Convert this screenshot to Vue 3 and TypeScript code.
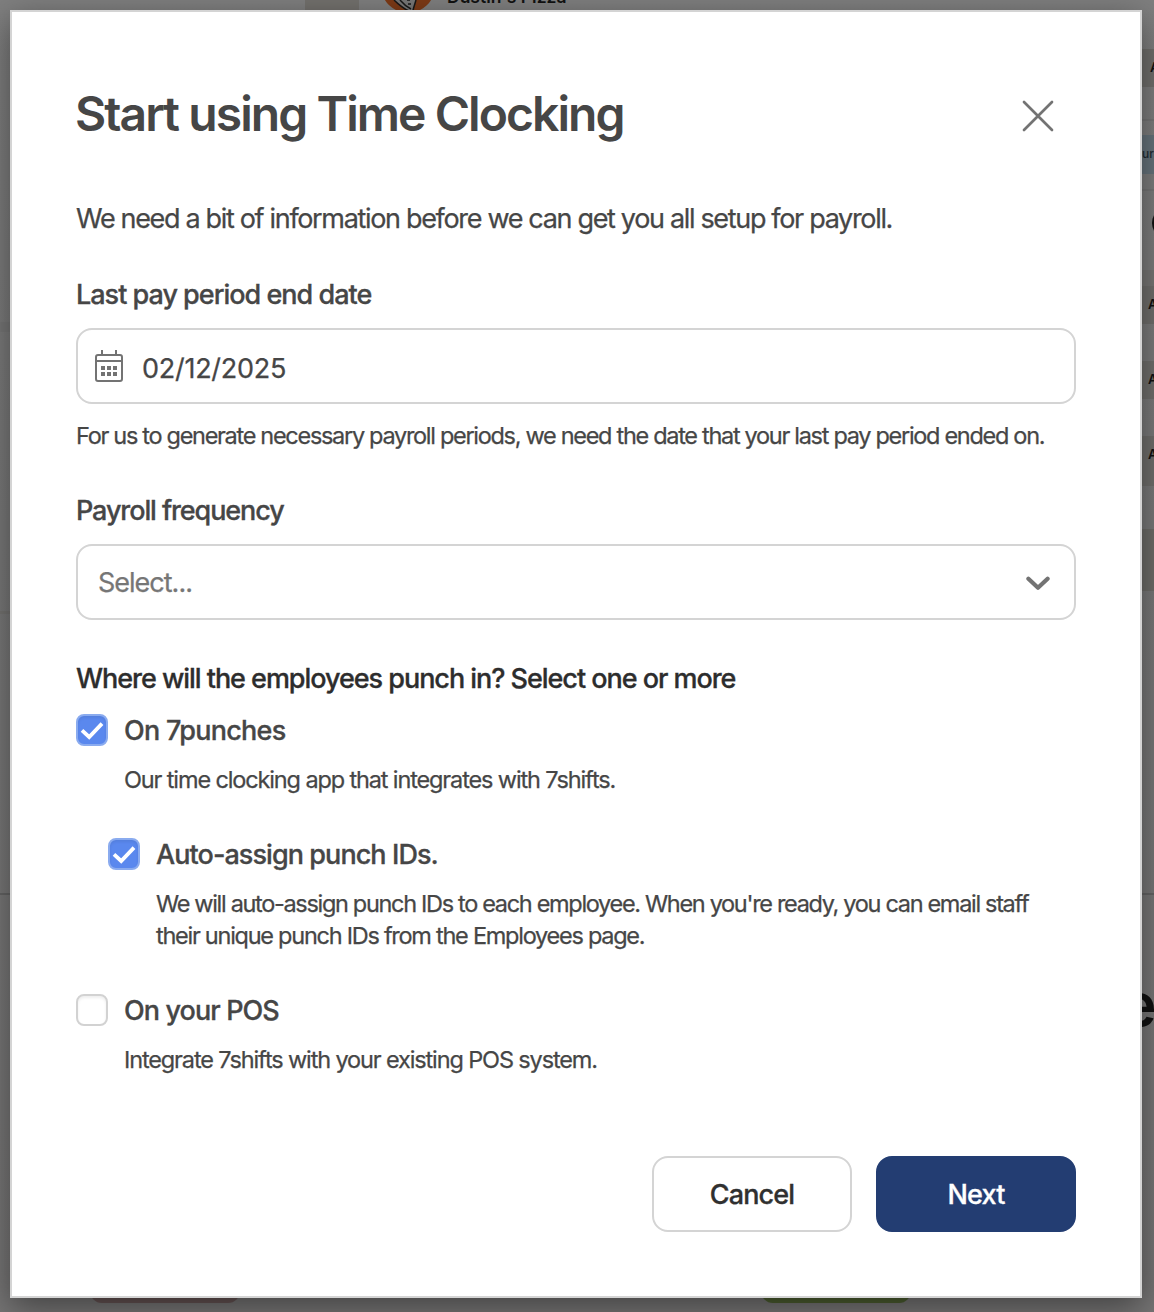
<script setup lang="ts">
import { ref } from 'vue'

interface Band {
  x: number
  y: number
  w: number
  h: number
  color: string
  radius?: number
}

// Page content that peeks out around the dialog, already dimmed by the overlay
const bands: Band[] = [
  { x: 305, y: 0, w: 54, h: 12, color: '#73716d' },
  { x: 1140, y: 49, w: 14, h: 38, color: '#706f6c' },
  { x: 1140, y: 119, w: 14, h: 2, color: '#757575' },
  { x: 1140, y: 135, w: 14, h: 39, color: '#66737b' },
  { x: 1140, y: 189, w: 14, h: 2, color: '#757575' },
  { x: 1140, y: 270, w: 14, h: 16, color: '#777674' },
  { x: 1140, y: 286, w: 14, h: 38, color: '#706f6c' },
  { x: 1140, y: 361, w: 14, h: 38, color: '#706f6c' },
  { x: 1140, y: 436, w: 14, h: 50, color: '#706f6c' },
  { x: 1140, y: 529, w: 14, h: 62, color: '#6e6d69' },
  { x: 0, y: 322, w: 12, h: 10, color: '#777777' },
  { x: 0, y: 611, w: 12, h: 3, color: '#747371' },
  { x: 0, y: 893, w: 1154, h: 2, color: '#646464' },
  { x: 90, y: 1270, w: 150, h: 33, color: '#655353', radius: 12 },
  { x: 761, y: 1270, w: 150, h: 33, color: '#4c5e30', radius: 12 },
]

const onPunches = ref(true)
const autoAssign = ref(true)
const onPos = ref(false)
</script>

<template>
  <div class="screen">
    <div class="backdrop" aria-hidden="true">
      <i
        v-for="(b, i) in bands"
        :key="i"
        class="band"
        :style="{ left: b.x + 'px', top: b.y + 'px', width: b.w + 'px', height: b.h + 'px', background: b.color, borderRadius: (b.radius ?? 0) + 'px' }"
      />
      <svg class="logo" width="54" height="12" viewBox="0 0 54 12">
        <circle cx="26" cy="-14" r="27" fill="#7d3a16" />
        <path d="M12 0 L25 10 L31 10 L34 0 Z" fill="#777" />
        <path d="M12 0 Q20 8 27 11 M18 0 Q23 6 29 9 M34 0 L31 10 M25 0h3M26 4h3" fill="none" stroke="#181818" stroke-width="1.5" />
      </svg>
      <span class="peek company">Dustin's Pizza</span>
      <span class="peek a a1">A</span>
      <span class="peek link">ur</span>
      <i class="avatar" />
      <span class="peek a a2">A</span>
      <span class="peek a a3">A</span>
      <span class="peek a a4">A</span>
      <span class="peek e">e</span>
    </div>

    <main class="dialog" role="dialog">
      <header class="head">
        <h1>Start using Time Clocking</h1>
        <button class="close" aria-label="Close">
          <svg width="32" height="32" viewBox="0 0 32 32">
            <path d="M2 2 30 30M30 2 2 30" fill="none" stroke="#737373" stroke-width="2.7" stroke-linecap="round" />
          </svg>
        </button>
      </header>

      <p class="intro">We need a bit of information before we can get you all setup for payroll.</p>

      <div class="label l-date">Last pay period end date</div>
      <div class="field">
        <svg class="cal" width="30" height="34" viewBox="0 0 30 34">
          <rect x="2" y="6" width="26" height="26" rx="2" fill="none" stroke="#737373" stroke-width="2" />
          <path d="M2 12H28M8 1V6M22 1V6" fill="none" stroke="#737373" stroke-width="2" />
          <path d="M7 17h4v4h-4zM13 17h4v4h-4zM19 17h4v4h-4zM7 23h4v4h-4zM13 23h4v4h-4zM19 23h4v4h-4z" fill="#737373" />
        </svg>
        <span class="date">02/12/2025</span>
      </div>
      <p class="help">For us to generate necessary payroll periods, we need the date that your last pay period ended on.</p>

      <div class="label l-freq">Payroll frequency</div>
      <div class="field select">
        <span class="placeholder">Select...</span>
        <svg class="chevron" width="24" height="16" viewBox="0 0 24 16">
          <path d="M2.4 2.7 12 11.8 21.6 2.7" fill="none" stroke="#737373" stroke-width="4.2" stroke-linecap="round" stroke-linejoin="round" />
        </svg>
      </div>

      <div class="legend">Where will the employees punch in? Select one or more</div>

      <div class="option first" @click="onPunches = !onPunches">
        <span class="box" :class="{ on: onPunches }">
          <svg v-if="onPunches" width="32" height="32" viewBox="0 0 32 32"><path d="M6 16.4 13.2 23 26 9.6" fill="none" stroke="#fff" stroke-width="3.8" /></svg>
        </span>
        <span class="t-punches">On 7punches</span>
      </div>
      <p class="desc d-punches">Our time clocking app that integrates with 7shifts.</p>

      <div class="nested">
        <div class="option" @click="autoAssign = !autoAssign">
          <span class="box" :class="{ on: autoAssign }">
            <svg v-if="autoAssign" width="32" height="32" viewBox="0 0 32 32"><path d="M6 16.4 13.2 23 26 9.6" fill="none" stroke="#fff" stroke-width="3.8" /></svg>
          </span>
          <span class="t-auto">Auto-assign punch IDs.</span>
        </div>
        <p class="desc">
          <span class="d-auto1">We will auto-assign punch IDs to each employee. When you're ready, you can email staff</span><br />
          <span class="d-auto2">their unique punch IDs from the Employees page.</span>
        </p>
      </div>

      <div class="option" @click="onPos = !onPos">
        <span class="box" :class="{ on: onPos }" />
        <span class="t-pos">On your POS</span>
      </div>
      <p class="desc d-pos">Integrate 7shifts with your existing POS system.</p>

      <footer class="actions">
        <button class="btn">Cancel</button>
        <button class="btn primary">Next</button>
      </footer>
    </main>
  </div>
</template>

<style>
body {
  margin: 0;
}
</style>

<style scoped>
.screen {
  position: relative;
  box-sizing: border-box;
  width: 1154px;
  height: 1312px;
  padding: 10px 12px 14px 10px;
  overflow: hidden;
  background: linear-gradient(#7f7f7f, #797979 40%, #767575);
  font-family: Inter, "Liberation Sans", sans-serif;
  color: #464646;
}
.backdrop {
  position: absolute;
  inset: 0;
}
.band,
.peek,
.logo,
.avatar {
  position: absolute;
}
.logo {
  left: 382px;
  top: 0;
}
.peek {
  color: #111;
  font-weight: 600;
  white-space: nowrap;
}
.company {
  left: 447px;
  top: -15px;
  font-size: 17.5px;
  line-height: 24px;
}
.a {
  left: 1148px;
  font-size: 13px;
  line-height: 20px;
}
.a1 {
  left: 1150px;
  top: 57px;
}
.a2 {
  top: 294px;
}
.a3 {
  top: 369px;
}
.a4 {
  top: 444px;
}
.link {
  left: 1142px;
  top: 144px;
  font-size: 12px;
  line-height: 20px;
  font-weight: 500;
  color: #222c33;
}
.avatar {
  left: 1152px;
  top: 208px;
  width: 28px;
  height: 30px;
  border-radius: 50%;
  background: #111;
}
.e {
  left: 1121px;
  top: 972px;
  font-size: 60px;
  line-height: 64px;
}
.dialog {
  position: relative;
  box-sizing: border-box;
  width: 1132px;
  height: 1288px;
  padding: 70px 64px 64px;
  border: 2px solid #d4d4d4;
  background: #fff;
  box-shadow: 0 10px 32px rgba(0, 0, 0, 0.44);
}
.head {
  display: flex;
  justify-content: space-between;
  align-items: center;
  height: 64px;
}
h1 {
  margin: 0 0 0 -1px;
  font-size: 48px;
  line-height: 64px;
  font-weight: 600;
  letter-spacing: -1.94px;
  white-space: nowrap;
}
button {
  font-family: inherit;
  padding: 0;
}
.close {
  display: flex;
  margin: 4px 22px 0 0;
  border: 0;
  background: none;
}
p {
  margin: 0;
  white-space: nowrap;
}
.intro,
.help,
.desc,
.date,
.placeholder {
  -webkit-text-stroke: 0.25px currentColor;
}
.intro {
  margin-top: 53px;
  font-size: 27px;
  line-height: 40px;
  letter-spacing: -1.33px;
}
.label,
.legend,
.option {
  -webkit-text-stroke: 0.3px currentColor;
}
.label,
.legend {
  font-size: 27px;
  line-height: 40px;
  font-weight: 500;
  letter-spacing: -1px;
  white-space: nowrap;
}
.l-date {
  margin-top: 36px;
}
.l-freq {
  margin-top: 39px;
  letter-spacing: -1.1px;
}
.field {
  box-sizing: border-box;
  display: flex;
  align-items: center;
  height: 76px;
  margin-top: 13px;
  padding: 0 22px 0 16px;
  border: 2px solid #d4d4d4;
  border-radius: 16px;
  font-size: 27px;
}
.date {
  margin: 4px 0 0 18px;
  letter-spacing: -0.27px;
}
.select {
  justify-content: space-between;
  padding: 0 24px 0 20px;
}
.placeholder {
  color: #767676;
  letter-spacing: -1px;
}
.chevron {
  margin-top: 4px;
}
.help {
  margin-top: 16px;
  font-size: 23.5px;
  line-height: 32px;
  letter-spacing: -1.3px;
}
.legend {
  margin-top: 39px;
  color: #2d2d2d;
  letter-spacing: -1.04px;
}
.option {
  display: flex;
  align-items: center;
  gap: 16px;
  height: 32px;
  margin-top: 42px;
  font-size: 27px;
  font-weight: 500;
}
.first {
  margin-top: 15px;
}
.t-punches {
  letter-spacing: -0.73px;
}
.t-auto {
  letter-spacing: -0.93px;
}
.t-pos {
  letter-spacing: -0.9px;
}
.box {
  box-sizing: border-box;
  display: flex;
  flex: none;
  width: 32px;
  height: 32px;
  border: 2px solid #d2d2d2;
  border-radius: 8px;
  box-shadow: inset 0 2px 3px rgba(0, 0, 0, 0.07);
}
.box.on {
  border-color: #8aabef;
  background: #5a88ee;
}
.box svg {
  flex: none;
  margin: -2px;
}
.desc {
  margin: 18px 0 0 48px;
  font-size: 23.5px;
  line-height: 32px;
  letter-spacing: -1.13px;
}
.d-auto1 {
  letter-spacing: -1.32px;
}
.d-auto2 {
  letter-spacing: -1.26px;
}
.nested {
  margin-left: 32px;
}
.actions {
  display: flex;
  justify-content: flex-end;
  gap: 24px;
  margin-top: 80px;
}
.btn {
  box-sizing: border-box;
  width: 200px;
  height: 76px;
  border: 2px solid #d4d4d4;
  border-radius: 16px;
  background: #fff;
  color: #303030;
  font-size: 27px;
  font-weight: 500;
  letter-spacing: -0.85px;
  -webkit-text-stroke: 0.3px currentColor;
}
.primary {
  border-color: #233d72;
  background: #233d72;
  color: #fff;
  letter-spacing: -0.8px;
}
</style>
